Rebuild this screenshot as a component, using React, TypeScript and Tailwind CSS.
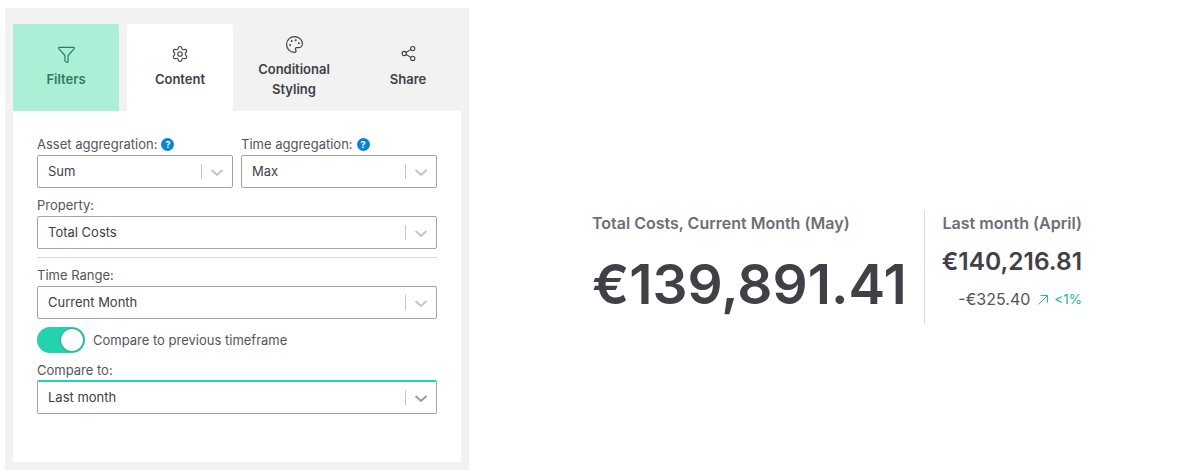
import React from 'react';
import { Filter, Settings, Palette, Share2 } from 'lucide-react';

const tabs = [
  { label: 'Filters', icon: Filter, size: 'h-[19px] w-[19px] mb-[5px]', cls: 'bg-[#abefd6] text-[#2b7d60]' },
  { label: 'Content', icon: Settings, size: 'h-[18px] w-[18px] mb-[6px]', cls: 'bg-white text-[#404046]' },
  { label: 'Conditional Styling', icon: Palette, size: 'h-[19px] w-[19px] mb-[5px]', cls: 'text-[#404046]' },
  { label: 'Share', icon: Share2, size: 'h-[17px] w-[17px] mb-[7px]', cls: 'text-[#404046]' },
];

function Help() {
  return (
    <span className="ml-[4px] inline-flex h-[13px] w-[13px] items-center justify-center rounded-full bg-[#0a84d0] text-[9px] font-bold leading-none text-white">
      ?
    </span>
  );
}

function Select({ value, accent, dark }: { value: string; accent?: boolean; dark?: boolean }) {
  return (
    <div
      className={`flex items-center rounded-[2px] border border-[#a3a3a3] pl-[10px] pr-[2px] text-[13px] text-[#404046] ${
        accent ? 'h-[34px] border-t-2 border-t-[#22d3ae]' : 'h-[33px]'
      }`}
    >
      <span className="flex-1">{value}</span>
      <span className="h-[15px] w-px bg-[#c4c4c4]" />
      <svg width="20" height="20" viewBox="0 0 20 20" className={`ml-[5px] mr-[3px] ${dark ? 'text-[#9a9a9a]' : 'text-[#c4c4c4]'}`}>
        <path d="M4.5 8l5.5 5 5.5-5" fill="none" stroke="currentColor" strokeWidth="2" />
      </svg>
    </div>
  );
}

export default function App() {
  return (
    <div className="flex h-[470px] w-[1182px] overflow-hidden bg-white font-['Inter',sans-serif]">
      <div className="ml-[5px] mt-[8px] flex h-[462px] w-[464px] flex-col bg-[#f2f2f2] px-[8px] pt-[16px]">
        <div className="flex gap-[8px]">
          {tabs.map((t) => (
            <div
              key={t.label}
              className={`flex h-[87px] w-[106px] flex-col items-center justify-center rounded-t-[2px] pb-[1px] text-center text-[13px] font-semibold leading-[20px] ${t.cls}`}
            >
              <t.icon className={t.size} strokeWidth={1.5} />
              <span className="px-[14px]">{t.label}</span>
            </div>
          ))}
        </div>
        <div className="h-[351px] bg-white px-[24px] pt-[25px] text-[13px] text-[#54545a]">
          <div className="flex gap-[8px]">
            <div className="flex-1">
              <div className="mb-[2px] flex h-[17px] items-center">
                Asset aggregration:
                <Help />
              </div>
              <Select value="Sum" />
            </div>
            <div className="flex-1">
              <div className="mb-[2px] flex h-[17px] items-center">
                Time aggregation:
                <Help />
              </div>
              <Select value="Max" />
            </div>
          </div>
          <div className="mb-[2px] mt-[9px] h-[17px] leading-[17px]">Property:</div>
          <Select value="Total Costs" />
          <div className="my-[8px] h-px bg-[#d9d9d9]" />
          <div className="mb-[2px] mt-[9px] h-[17px] leading-[17px]">Time Range:</div>
          <Select value="Current Month" />
          <div className="mt-[8px] flex items-center gap-[8px]">
            <div className="flex h-[26px] w-[48px] items-center justify-end rounded-full bg-[#22d3ae] pr-[2px]">
              <div className="h-[22px] w-[22px] rounded-full bg-white shadow-[0_0_2px_rgba(0,0,0,0.5)]" />
            </div>
            <span className="pt-[2px]">Compare to previous timeframe</span>
          </div>
          <div className="mb-[2px] mt-[8px] h-[17px] leading-[19px]">Compare to:</div>
          <Select value="Last month" accent dark />
        </div>
      </div>
      <div className="ml-[123px] mt-[211px] flex h-[113px] items-start">
        <div className="w-[332px]">
          <div className="mt-[3px] text-[16px] font-semibold leading-[19px] text-[#6e6e73]">Total Costs, Current Month (May)</div>
          <div className="mt-[19px] whitespace-nowrap text-[55px] font-semibold leading-[64px] text-[#404046]">€139,891.41</div>
        </div>
        <div className="h-[113px] w-px bg-[#d9d9d9]" />
        <div className="ml-[17px] flex w-[140px] flex-col items-end">
          <div className="mt-[3px] whitespace-nowrap text-[16.1px] font-semibold leading-[19px] text-[#6e6e73]">Last month (April)</div>
          <div className="mt-[13px] whitespace-nowrap text-[24.5px] font-semibold leading-[30px] text-[#404046]">€140,216.81</div>
          <div className="mt-[14px] flex items-center whitespace-nowrap text-[16px] leading-[19px] text-[#54545a]">
            -€325.40
            <svg width="12" height="12" viewBox="0 0 12 12" className="ml-[7px] mr-[5px] text-[#22b89a]">
              <path d="M1.5 10.5L10.5 1.5M3.5 1.5h7v7" fill="none" stroke="currentColor" strokeWidth="1" />
            </svg>
            <span className="text-[13.5px] text-[#22b89a]">&lt;1%</span>
          </div>
        </div>
      </div>
    </div>
  );
}
